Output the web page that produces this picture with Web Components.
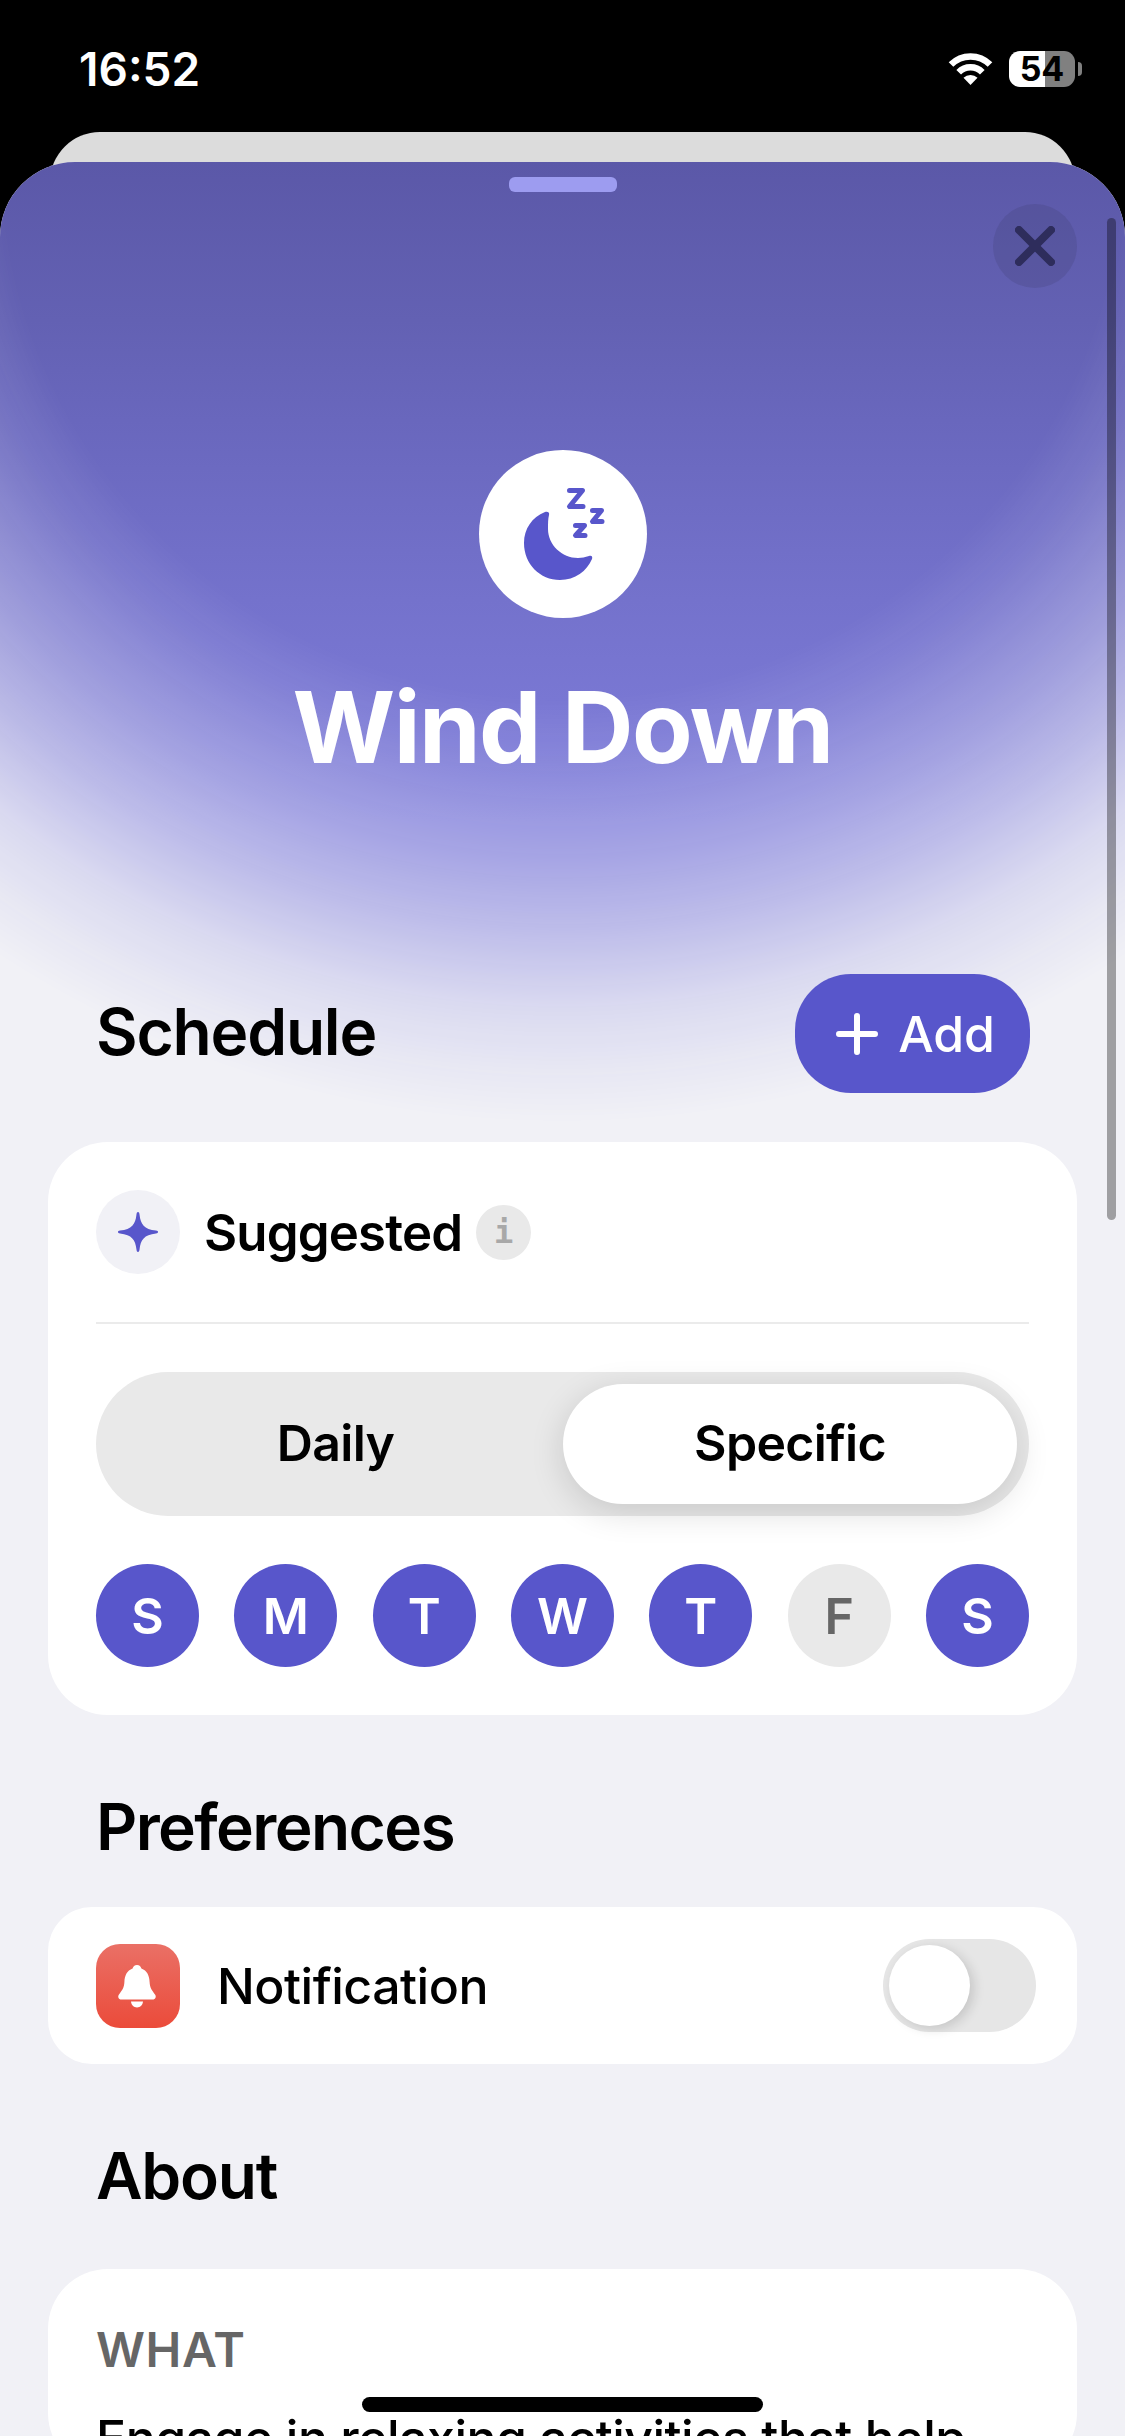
<!DOCTYPE html>
<html lang="en">
<head>
<meta charset="utf-8">
<title>Wind Down</title>
<style>
    html, body { margin: 0; padding: 0; background: #000; }
    body { font-family: Inter, "Liberation Sans", sans-serif; }
</style>
</head>
<body>
<phone-screen>
    <status-bar slot="status"></status-bar>
    <sheet-panel>
        <hero-head title="Wind Down"></hero-head>
        <section-head add style="--top: 187px; --bottom: 49px;">Schedule</section-head>
        <app-card style="--radius: 60px; --pad: 48px;">
            <suggest-row></suggest-row>
            <segment-picker></segment-picker>
            <day-picker></day-picker>
        </app-card>
        <section-head style="--top: 72px; --bottom: 40px; --track: -1.6px;">Preferences</section-head>
        <app-card style="--radius: 44px; --pad: 0px;">
            <notify-row></notify-row>
        </app-card>
        <section-head style="--top: 72px; --bottom: 53px;">About</section-head>
        <app-card style="--radius: 60px; --pad: 51px 48px 0;">
            <about-block label="WHAT">Engage in relaxing activities that help</about-block>
        </app-card>
    </sheet-panel>
</phone-screen>

<script>
const INDIGO = '#5856cb';

class PhoneScreen extends HTMLElement {
    constructor() {
        super();
        this.attachShadow({ mode: 'open' });
    }

    connectedCallback() {
        this.shadowRoot.innerHTML = `
            <style>
                :host {
                    display: block;
                    position: relative;
                    width: 1125px;
                    height: 2436px;
                    overflow: hidden;
                    background: #000;
                }
                .home {
                    position: absolute;
                    left: 362px;
                    top: 2397px;
                    width: 401px;
                    height: 15px;
                    border-radius: 8px;
                    background: #000;
                }
            </style>
            <slot name="status"></slot>
            <slot></slot>
            <div class="home"></div>
        `;
    }
}

class StatusBar extends HTMLElement {
    constructor() {
        super();
        this.attachShadow({ mode: 'open' });
    }

    connectedCallback() {
        this.shadowRoot.innerHTML = `
            <style>
                :host {
                    display: flex;
                    align-items: flex-start;
                    justify-content: space-between;
                    height: 132px;
                    box-sizing: border-box;
                    padding: 51px 50px 0 79px;
                    color: #fff;
                }
                .time {
                    font-size: 46px;
                    font-weight: 600;
                    line-height: 36px;
                }
                .right {
                    display: flex;
                    align-items: center;
                    gap: 16px;
                }
                .battery {
                    position: relative;
                    width: 66px;
                    height: 36px;
                    border-radius: 11px;
                    background: linear-gradient(90deg, #fff 0 54.5%, #808080 54.5% 100%);
                    color: #000;
                    font-size: 34px;
                    font-weight: 700;
                    line-height: 36px;
                    text-align: center;
                }
                .battery::after {
                    content: '';
                    position: absolute;
                    left: 69px;
                    top: 11px;
                    width: 4px;
                    height: 14px;
                    border-radius: 0 4px 4px 0;
                    background: #808080;
                }
            </style>
            <div class="time">16:52</div>
            <div class="right">
                <svg width="45" height="34" viewBox="0 0 45 34" fill="none" stroke="#fff" stroke-width="6.5">
                    <path d="M3 12.5 A27.5 27.5 0 0 1 42 12.5"/>
                    <path d="M10.7 20.3 A16.5 16.5 0 0 1 34.3 20.3"/>
                    <path d="M22.5 33 L15.5 25.8 A10 10 0 0 1 29.5 25.8 Z" fill="#fff" stroke="none"/>
                </svg>
                <div class="battery">54</div>
            </div>
        `;
    }
}

class SheetPanel extends HTMLElement {
    constructor() {
        super();
        this.attachShadow({ mode: 'open' });
    }

    connectedCallback() {
        const fade = 'radial-gradient(1000px 960px at 562px 0, #000 0, #000 56%, rgba(0,0,0,.9) 62%, rgba(0,0,0,.67) 72%, rgba(0,0,0,.45) 80%, rgba(0,0,0,.2) 88%, rgba(0,0,0,.07) 95%, transparent 100%)';
        this.shadowRoot.innerHTML = `
            <style>
                :host { display: block; }
                .behind {
                    height: 60px;
                    margin: 0 50px -30px;
                    border-radius: 50px 50px 0 0;
                    background: #dcdcdc;
                }
                .sheet {
                    position: relative;
                    height: 2274px;
                    overflow: hidden;
                    border-radius: 75px 75px 0 0;
                    background: #f1f1f6;
                }
                .glow {
                    position: absolute;
                    left: 0;
                    top: 0;
                    width: 100%;
                    height: 960px;
                    background: linear-gradient(180deg, #5b58a8 0, #6361b3 158px, #6967bd 258px, #7472cc 438px, #7f7ddb 660px);
                    -webkit-mask-image: ${fade};
                    mask-image: ${fade};
                }
                .grabber {
                    position: absolute;
                    left: 509px;
                    top: 15px;
                    width: 108px;
                    height: 15px;
                    border-radius: 6px;
                    background: #9d9cf0;
                }
                .close {
                    position: absolute;
                    left: 993px;
                    top: 42px;
                    width: 84px;
                    height: 84px;
                    border-radius: 50%;
                    background: rgba(50, 50, 90, 0.16);
                    display: flex;
                    align-items: center;
                    justify-content: center;
                }
                .scroll {
                    position: absolute;
                    left: 1107px;
                    top: 56px;
                    width: 9px;
                    height: 1002px;
                    border-radius: 5px;
                    background: rgba(0, 0, 0, 0.34);
                }
                .content { position: relative; }
            </style>
            <div class="behind"></div>
            <div class="sheet">
                <div class="glow"></div>
                <div class="content"><slot></slot></div>
                <div class="grabber"></div>
                <div class="close">
                    <svg width="40" height="40" viewBox="0 0 40 40" fill="none" stroke="#2e2d5c" stroke-width="8" stroke-linecap="round">
                        <path d="M4 4 L36 36 M36 4 L4 36"/>
                    </svg>
                </div>
                <div class="scroll"></div>
            </div>
        `;
    }
}

class HeroHead extends HTMLElement {
    constructor() {
        super();
        this.attachShadow({ mode: 'open' });
    }

    connectedCallback() {
        this.shadowRoot.innerHTML = `
            <style>
                :host {
                    display: flex;
                    flex-direction: column;
                    align-items: center;
                    padding-top: 288px;
                }
                .circle {
                    width: 168px;
                    height: 168px;
                    border-radius: 50%;
                    background: #fff;
                }
                .circle svg { display: block; }
                h1 {
                    margin: 49px 0 0;
                    font-size: 99px;
                    line-height: 120px;
                    font-weight: 700;
                    letter-spacing: -1.5px;
                    color: #fff;
                }
            </style>
            <div class="circle">
                <svg width="168" height="168" viewBox="-21 -20 168 168">
                    <path fill="${INDIGO}" d="M49 45 C50 42 47 41 45 42 C32 47 24 59 24 73 C24 94 40 110 60 110 C75 110 87 101 92 89 C93 86 91 85 89 86 C85 87 82 88 78 88 C62 88 48 75 48 59 C48 53 48 49 49 45 Z"/>
                    <g fill="none" stroke="${INDIGO}" stroke-width="5" stroke-linecap="round" stroke-linejoin="round">
                        <path d="M69.5 20.5 H82.5 L69.5 36.5 H83"/>
                        <path d="M92.5 40.5 H101.5 L92.5 51.5 H102"/>
                        <path d="M75.5 55.5 H84.5 L75.5 65.5 H85"/>
                    </g>
                </svg>
            </div>
            <h1>${this.getAttribute('title')}</h1>
        `;
    }
}

class SectionHead extends HTMLElement {
    constructor() {
        super();
        this.attachShadow({ mode: 'open' });
    }

    connectedCallback() {
        const addButton = this.hasAttribute('add') ? `
            <div class="add">
                <svg width="42" height="42" viewBox="0 0 42 42" fill="none" stroke="#fff" stroke-width="6" stroke-linecap="round">
                    <path d="M21 3 V39 M3 21 H39"/>
                </svg>
                <span>Add</span>
            </div>` : '';
        this.shadowRoot.innerHTML = `
            <style>
                :host {
                    display: flex;
                    align-items: center;
                    justify-content: space-between;
                    margin: var(--top, 0) 95px var(--bottom, 0) 96px;
                    min-height: 80px;
                    color: #000;
                }
                .label {
                    font-size: 64px;
                    font-weight: 600;
                    line-height: 80px;
                    letter-spacing: var(--track, -1.2px);
                }
                :host([add]) .label { padding-bottom: 3px; }
                .add {
                    display: flex;
                    align-items: center;
                    gap: 20px;
                    height: 119px;
                    box-sizing: border-box;
                    padding: 0 35px 0 41px;
                    border-radius: 56px;
                    background: ${INDIGO};
                    color: #fff;
                    font-size: 50px;
                    font-weight: 550;
                }
            </style>
            <div class="label"><slot></slot></div>
            ${addButton}
        `;
    }
}

class AppCard extends HTMLElement {
    constructor() {
        super();
        this.attachShadow({ mode: 'open' });
    }

    connectedCallback() {
        this.shadowRoot.innerHTML = `
            <style>
                :host {
                    display: block;
                    margin: 0 48px;
                    padding: var(--pad, 48px);
                    border-radius: var(--radius, 60px);
                    background: #fff;
                }
            </style>
            <slot></slot>
        `;
    }
}

class SuggestRow extends HTMLElement {
    constructor() {
        super();
        this.attachShadow({ mode: 'open' });
    }

    connectedCallback() {
        this.shadowRoot.innerHTML = `
            <style>
                :host {
                    display: flex;
                    align-items: center;
                    height: 84px;
                    padding-bottom: 48px;
                    margin-bottom: 48px;
                    border-bottom: 2px solid #ebebeb;
                }
                .spark {
                    width: 84px;
                    height: 84px;
                    border-radius: 50%;
                    background: #f1f1f6;
                    display: flex;
                    align-items: center;
                    justify-content: center;
                }
                .name {
                    margin-left: 24px;
                    font-size: 51px;
                    font-weight: 560;
                    letter-spacing: -0.85px;
                    color: #000;
                }
                .info {
                    width: 55px;
                    height: 55px;
                    margin-left: 14px;
                    border-radius: 50%;
                    background: #e9e9e9;
                    color: #a8a8a8;
                    font: 700 32px/55px "DejaVu Sans Mono", monospace;
                    text-align: center;
                }
            </style>
            <div class="spark">
                <svg width="40" height="40" viewBox="0 0 40 40">
                    <path fill="${INDIGO}" d="M20 0 C21 0 21.4 1 21.6 3 C22.6 12 26 17.4 38 18.6 C39.4 18.8 40 19.2 40 20 C40 20.8 39.4 21.2 38 21.4 C26 22.6 22.6 28 21.6 37 C21.4 39 21 40 20 40 C19 40 18.6 39 18.4 37 C17.4 28 14 22.6 2 21.4 C.6 21.2 0 20.8 0 20 C0 19.2 .6 18.8 2 18.6 C14 17.4 17.4 12 18.4 3 C18.6 1 19 0 20 0 Z"/>
                </svg>
            </div>
            <div class="name">Suggested</div>
            <div class="info">i</div>
        `;
    }
}

class SegmentPicker extends HTMLElement {
    constructor() {
        super();
        this.attachShadow({ mode: 'open' });
    }

    connectedCallback() {
        this.shadowRoot.innerHTML = `
            <style>
                :host {
                    display: flex;
                    align-items: stretch;
                    height: 144px;
                    box-sizing: border-box;
                    padding: 12px;
                    border-radius: 72px;
                    background: #e9e9e9;
                    font-size: 50px;
                    font-weight: 590;
                    letter-spacing: -0.7px;
                    color: #000;
                }
                div {
                    display: flex;
                    align-items: center;
                    justify-content: center;
                    padding-bottom: 3px;
                    box-sizing: border-box;
                }
                .daily { flex: 1; }
                .specific {
                    width: 454px;
                    border-radius: 60px;
                    background: #fff;
                    box-shadow: 0 8px 34px rgba(0, 0, 0, 0.14);
                }
            </style>
            <div class="daily">Daily</div>
            <div class="specific">Specific</div>
        `;
    }
}

class DayPicker extends HTMLElement {
    constructor() {
        super();
        this.attachShadow({ mode: 'open' });
    }

    connectedCallback() {
        const days = [['S', 1], ['M', 1], ['T', 1], ['W', 1], ['T', 1], ['F', 0], ['S', 1]];
        this.shadowRoot.innerHTML = `
            <style>
                :host {
                    display: flex;
                    justify-content: space-between;
                    margin-top: 48px;
                }
                .day {
                    width: 103px;
                    height: 103px;
                    border-radius: 50%;
                    display: flex;
                    align-items: center;
                    justify-content: center;
                    font-size: 50px;
                    font-weight: 560;
                    background: ${INDIGO};
                    color: #fff;
                }
                .off {
                    background: #e9e9e9;
                    color: #666;
                }
            </style>
            ${days.map(([letter, on]) => `<div class="day ${on ? '' : 'off'}">${letter}</div>`).join('')}
        `;
    }
}

class NotifyRow extends HTMLElement {
    constructor() {
        super();
        this.attachShadow({ mode: 'open' });
    }

    connectedCallback() {
        this.shadowRoot.innerHTML = `
            <style>
                :host {
                    display: flex;
                    align-items: center;
                    height: 157px;
                    padding: 0 41px 0 48px;
                }
                .bell {
                    width: 84px;
                    height: 84px;
                    border-radius: 24px;
                    background: linear-gradient(180deg, #ea7066, #eb4b3a);
                }
                .bell svg { display: block; }
                .name {
                    flex: 1;
                    margin-left: 37px;
                    font-size: 50px;
                    font-weight: 450;
                    letter-spacing: -0.5px;
                    color: #000;
                }
                .toggle {
                    width: 153px;
                    height: 93px;
                    box-sizing: border-box;
                    padding: 6px;
                    border-radius: 47px;
                    background: #e6e6e6;
                }
                .knob {
                    width: 81px;
                    height: 81px;
                    border-radius: 50%;
                    background: #fff;
                    box-shadow: 4px 3px 12px rgba(0, 0, 0, 0.14);
                }
            </style>
            <div class="bell">
                <svg width="84" height="84" viewBox="0 0 84 84" fill="#fff">
                    <path d="M41 21 C43.4 21 45 22.6 45.4 24.6 C51 26.6 53.4 31.6 53.6 38 C53.8 44 56.4 47 59 50.4 C60.6 52.6 59.6 55.4 56.6 55.4 H25.4 C22.4 55.4 21.4 52.6 23 50.4 C25.6 47 28.2 44 28.4 38 C28.6 31.6 31 26.6 36.6 24.6 C37 22.6 38.6 21 41 21 Z"/>
                    <path d="M35 57.5 H47 C46.6 61 44.4 63.4 41 63.4 C37.6 63.4 35.4 61 35 57.5 Z"/>
                </svg>
            </div>
            <div class="name">Notification</div>
            <div class="toggle"><div class="knob"></div></div>
        `;
    }
}

class AboutBlock extends HTMLElement {
    constructor() {
        super();
        this.attachShadow({ mode: 'open' });
    }

    connectedCallback() {
        this.shadowRoot.innerHTML = `
            <style>
                :host { display: block; }
                .label {
                    font-size: 48px;
                    font-weight: 600;
                    line-height: 60px;
                    letter-spacing: 0.6px;
                    color: #666;
                }
                .body {
                    margin-top: 23px;
                    font-size: 50px;
                    font-weight: 450;
                    line-height: 70px;
                    letter-spacing: -0.5px;
                    color: #000;
                    white-space: nowrap;
                }
            </style>
            <div class="label">${this.getAttribute('label')}</div>
            <div class="body"><slot></slot></div>
        `;
    }
}

customElements.define('phone-screen', PhoneScreen);
customElements.define('status-bar', StatusBar);
customElements.define('sheet-panel', SheetPanel);
customElements.define('hero-head', HeroHead);
customElements.define('section-head', SectionHead);
customElements.define('app-card', AppCard);
customElements.define('suggest-row', SuggestRow);
customElements.define('segment-picker', SegmentPicker);
customElements.define('day-picker', DayPicker);
customElements.define('notify-row', NotifyRow);
customElements.define('about-block', AboutBlock);
</script>
</body>
</html>
